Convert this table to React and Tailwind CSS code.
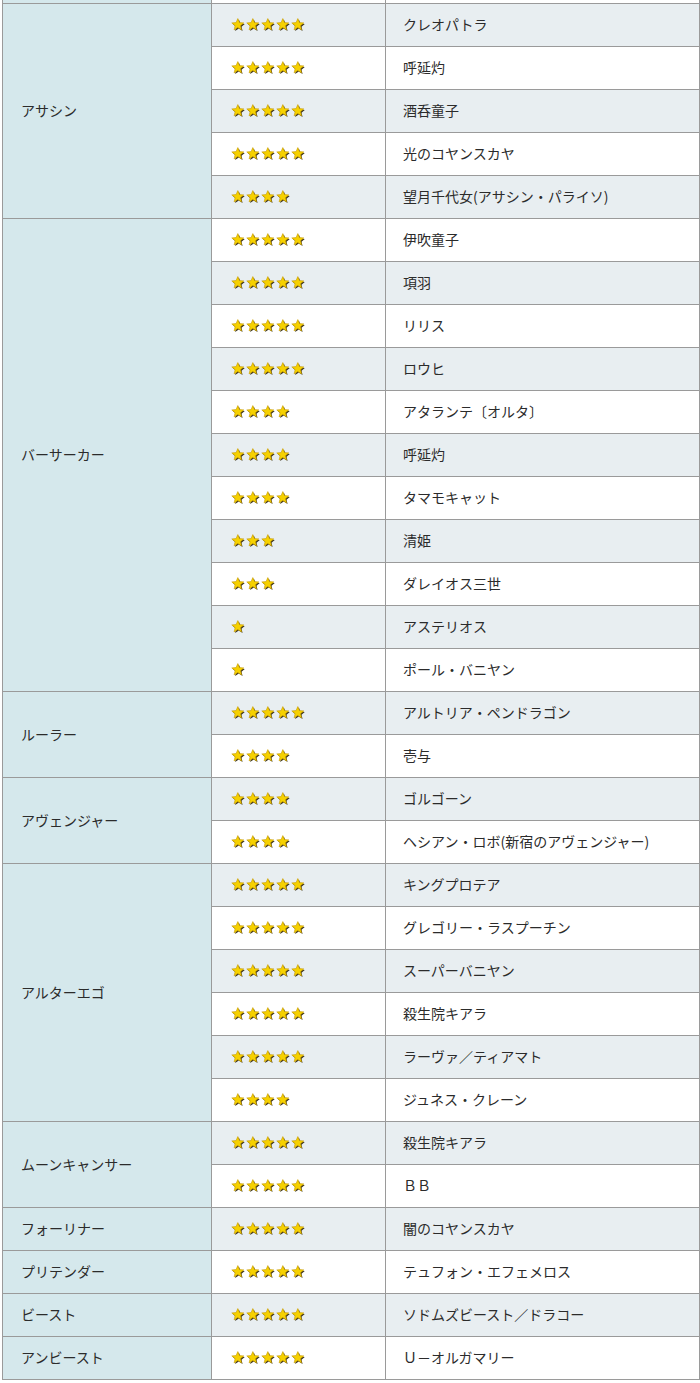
import React from 'react';

const groups = [
  {
    name: 'アサシン',
    rows: [
      [5, 'クレオパトラ'],
      [5, '呼延灼'],
      [5, '酒呑童子'],
      [5, '光のコヤンスカヤ'],
      [4, '望月千代女(アサシン・パライソ)'],
    ],
  },
  {
    name: 'バーサーカー',
    rows: [
      [5, '伊吹童子'],
      [5, '項羽'],
      [5, 'リリス'],
      [5, 'ロウヒ'],
      [4, 'アタランテ〔オルタ〕'],
      [4, '呼延灼'],
      [4, 'タマモキャット'],
      [3, '清姫'],
      [3, 'ダレイオス三世'],
      [1, 'アステリオス'],
      [1, 'ポール・バニヤン'],
    ],
  },
  {
    name: 'ルーラー',
    rows: [
      [5, 'アルトリア・ペンドラゴン'],
      [4, '壱与'],
    ],
  },
  {
    name: 'アヴェンジャー',
    rows: [
      [4, 'ゴルゴーン'],
      [4, 'ヘシアン・ロボ(新宿のアヴェンジャー)'],
    ],
  },
  {
    name: 'アルターエゴ',
    rows: [
      [5, 'キングプロテア'],
      [5, 'グレゴリー・ラスプーチン'],
      [5, 'スーパーバニヤン'],
      [5, '殺生院キアラ'],
      [5, 'ラーヴァ／ティアマト'],
      [4, 'ジュネス・クレーン'],
    ],
  },
  {
    name: 'ムーンキャンサー',
    rows: [
      [5, '殺生院キアラ'],
      [5, 'ＢＢ'],
    ],
  },
  { name: 'フォーリナー', rows: [[5, '闇のコヤンスカヤ']] },
  { name: 'プリテンダー', rows: [[5, 'テュフォン・エフェメロス']] },
  { name: 'ビースト', rows: [[5, 'ソドムズビースト／ドラコー']] },
  { name: 'アンビースト', rows: [[5, 'Ｕ－オルガマリー']] },
];

const Star = () => (
  <svg width="15" height="14" viewBox="0 0 15 14" className="block">
    {/* dark drop shadow */}
    <path
      d="M7.8 1.6 L9.5 5.6 L13.8 5.9 L10.5 8.7 L11.6 12.9 L7.8 10.6 L4.1 12.9 L5.1 8.7 L1.8 5.9 L6.1 5.6 Z"
      fill="#3a3320"
    />
    <path
      d="M6.8 0.6 L8.5 4.6 L12.8 4.9 L9.5 7.7 L10.6 11.9 L6.8 9.6 L3.1 11.9 L4.1 7.7 L0.8 4.9 L5.1 4.6 Z"
      fill="#f6d100"
      stroke="#c79a00"
      strokeWidth="0.6"
    />
  </svg>
);

const Stars = ({ n }) => (
  <div className="flex items-center">
    {Array.from({ length: n }).map((_, i) => (
      <Star key={i} />
    ))}
  </div>
);

export default function App() {
  let idx = 0;
  return (
    <div className="bg-white w-[700px] h-[1383px] pl-[2px]" style={{ fontFamily: '"Noto Sans CJK JP", "Noto Sans", sans-serif' }}>
      <table className="table-fixed w-[697px] border-collapse text-[14px] text-[#2b2b2b]">
        <colgroup>
          <col className="w-[209px]" />
          <col className="w-[174px]" />
          <col className="w-[314px]" />
        </colgroup>
        <tbody>
          <tr className="h-[3px]">
            <td className="p-0 border-x border-[#9a9a9a] bg-[#d5e8ec]"></td>
            <td className="p-0 border-x border-[#9a9a9a] bg-white"></td>
            <td className="p-0 border-x border-[#9a9a9a] bg-white"></td>
          </tr>
          {groups.map((g) =>
            g.rows.map(([n, name], i) => {
              const shaded = idx % 2 === 0;
              idx += 1;
              const bg = shaded ? 'bg-[#e8eef1]' : 'bg-white';
              return (
                <tr key={g.name + i} className="h-[43px]">
                  {i === 0 && (
                    <td
                      rowSpan={g.rows.length}
                      className="border border-[#9a9a9a] bg-[#d5e8ec] pl-[18px] align-middle"
                    >
                      {g.name}
                    </td>
                  )}
                  <td className={`border border-[#9a9a9a] pl-[19px] align-middle ${bg}`}>
                    <Stars n={n} />
                  </td>
                  <td className={`border border-[#9a9a9a] pl-[17px] align-middle ${bg}`}>{name}</td>
                </tr>
              );
            })
          )}
        </tbody>
      </table>
    </div>
  );
}
